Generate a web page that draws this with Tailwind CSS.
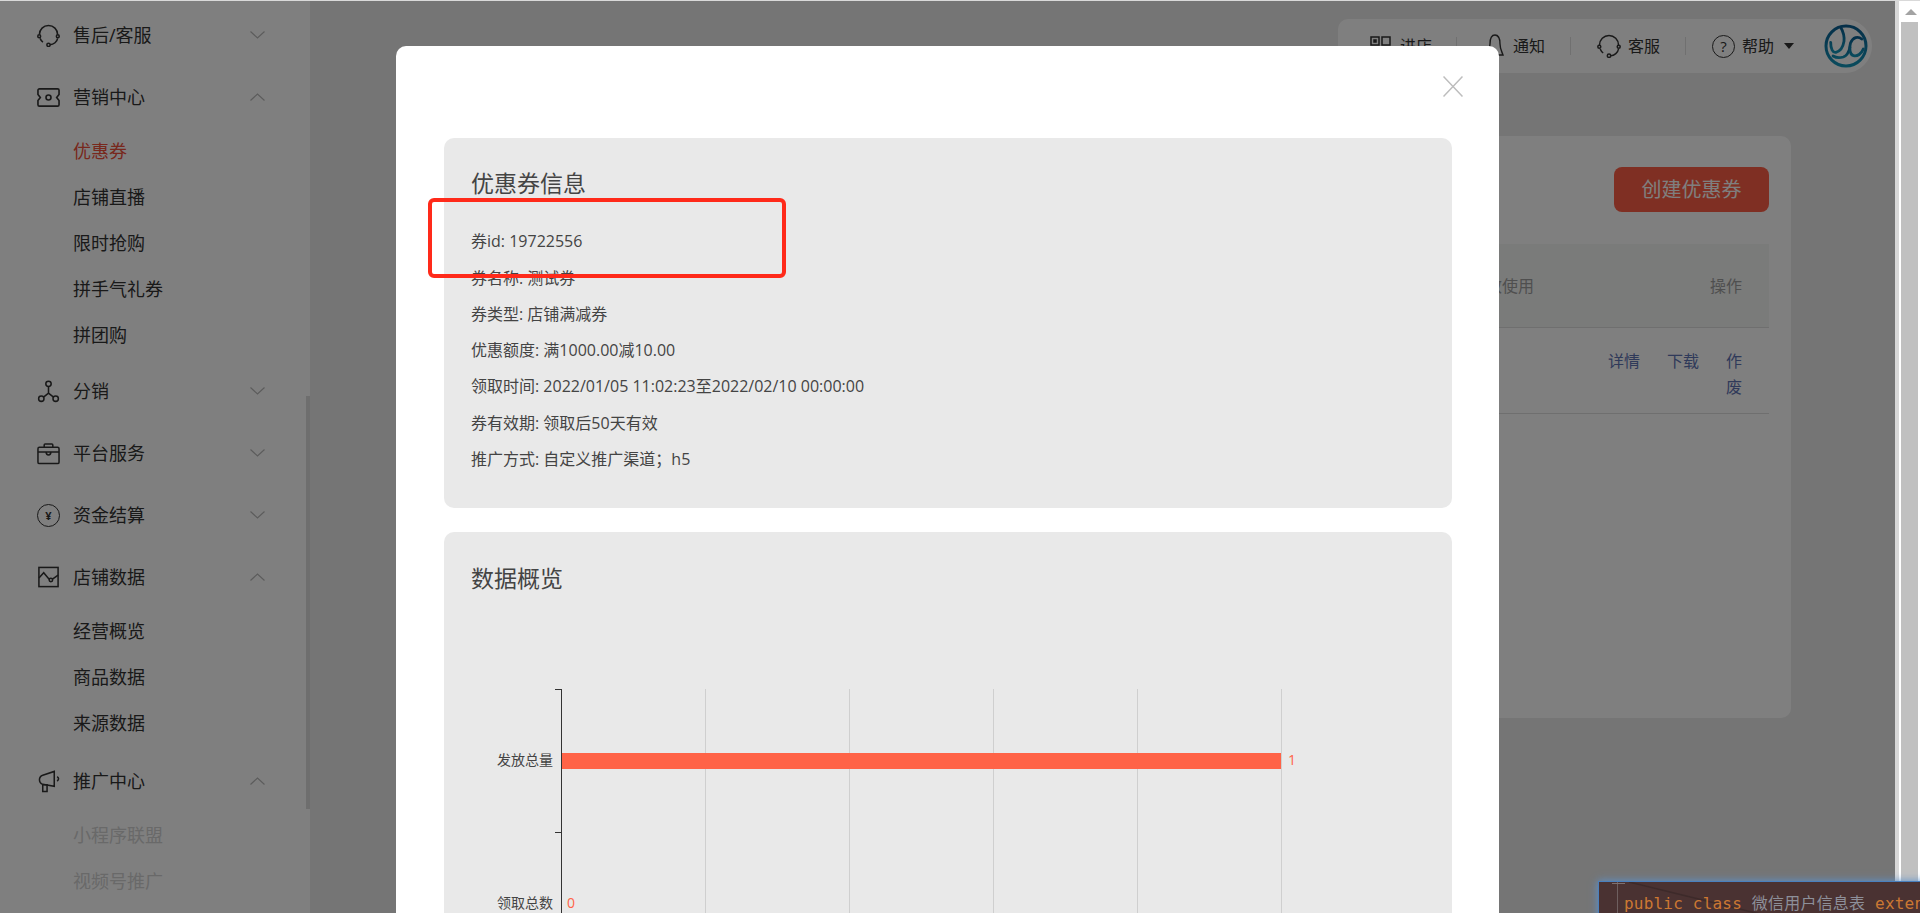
<!DOCTYPE html>
<html lang="zh-CN">
  <head>
    <meta charset="UTF-8" />
    <title>优惠券</title>
    <script src="https://cdn.jsdelivr.net/npm/@tailwindcss/browser@4"></script>
  </head>
  <body class="h-[913px] overflow-hidden bg-[#ebebeb] font-['Open_Sans','Noto_Sans_CJK_SC',sans-serif] text-[#333]">
    <div class="h-px bg-[#d9d9d9]"></div>
    <div class="flex h-[912px]">
      <div class="relative w-[1895px] shrink-0 overflow-hidden">
        <div class="flex h-full">
          <!-- Sidebar -->
          <div class="relative h-full w-[310px] shrink-0 overflow-hidden bg-white pt-[3px] text-[18px]">
            <div class="absolute right-0 top-[395px] h-[413px] w-[4px] bg-[#dcdcdc]"></div>

            <div class="flex h-[62px] items-center pl-[37px] pr-[45px]">
              <svg class="mr-[13px] h-[23px] w-[23px]" viewBox="0 0 24 24" fill="none" stroke="#333" stroke-width="1.600"><path d="M2.500 11a9.500 9.500 0 0 1 19 0" /><circle cx="2.300" cy="12.800" r="1.500" /><circle cx="21.700" cy="12.800" r="1.500" /><path d="M3.200 15c.6 1.500 1.500 3 3 4M21.500 15c-.5 3.500-4 6.500-8 6.700" /><circle cx="12" cy="21.700" r="1.700" /></svg>
              <span class="flex-1">售后/客服</span>
              <svg class="h-[8px] w-[15px]" viewBox="0 0 15 8" fill="none" stroke="#b8b8b8" stroke-width="1.2"><path d="M0.500 0.500 7.500 7 14.500 0.500" /></svg>
            </div>

            <div class="flex h-[62px] items-center pl-[37px] pr-[45px]">
              <svg class="mr-[13px] h-[23px] w-[23px]" viewBox="0 0 24 24" fill="none" stroke="#333" stroke-width="1.700"><path d="M2.500 3h19a1.500 1.500 0 0 1 1.500 1.500v4.300L20.500 12l2.500 3.200v4.300a1.500 1.500 0 0 1-1.500 1.500h-19A1.500 1.500 0 0 1 1 19.500v-4.300L3.500 12 1 8.800V4.500A1.500 1.500 0 0 1 2.500 3z" /><circle cx="12" cy="12" r="2.600" /></svg>
              <span class="flex-1">营销中心</span>
              <svg class="h-[8px] w-[15px]" viewBox="0 0 15 8" fill="none" stroke="#b8b8b8" stroke-width="1.2"><path d="M0.500 7.500 7.500 1 14.500 7.500" /></svg>
            </div>
            <div class="pb-[2px] pl-[73px]">
              <div class="flex h-[46px] items-center text-[#f0503a]">优惠券</div>
              <div class="flex h-[46px] items-center">店铺直播</div>
              <div class="flex h-[46px] items-center">限时抢购</div>
              <div class="flex h-[46px] items-center">拼手气礼券</div>
              <div class="flex h-[46px] items-center">拼团购</div>
            </div>

            <div class="flex h-[62px] items-center pl-[37px] pr-[45px]">
              <svg class="mr-[13px] h-[23px] w-[23px]" viewBox="0 0 24 24" fill="none" stroke="#333" stroke-width="1.600"><circle cx="12" cy="4" r="2.800" /><circle cx="4.500" cy="19.500" r="2.800" /><circle cx="19.500" cy="19.500" r="2.800" /><path d="M12 6.800v7M12 13.800 6.800 17.800M12 13.800l5.200 4" /></svg>
              <span class="flex-1">分销</span>
              <svg class="h-[8px] w-[15px]" viewBox="0 0 15 8" fill="none" stroke="#b8b8b8" stroke-width="1.2"><path d="M0.500 0.500 7.500 7 14.500 0.500" /></svg>
            </div>

            <div class="flex h-[62px] items-center pl-[37px] pr-[45px]">
              <svg class="mr-[13px] h-[23px] w-[23px]" viewBox="0 0 24 24" fill="none" stroke="#333" stroke-width="1.600"><rect x="1" y="5.500" width="22" height="17" rx="1.500" /><path d="M7.500 5.500v-2.500a1 1 0 0 1 1-1h7a1 1 0 0 1 1 1v2.500M1 10.500h22M9.500 10.500c0 4 5 4 5 0" /></svg>
              <span class="flex-1">平台服务</span>
              <svg class="h-[8px] w-[15px]" viewBox="0 0 15 8" fill="none" stroke="#b8b8b8" stroke-width="1.2"><path d="M0.500 0.500 7.500 7 14.500 0.500" /></svg>
            </div>

            <div class="flex h-[62px] items-center pl-[37px] pr-[45px]">
              <div class="mr-[13px] flex h-[23px] w-[23px] items-center justify-center rounded-full border-[1.5px] border-[#333] text-[11px] leading-none font-bold">¥</div>
              <span class="flex-1">资金结算</span>
              <svg class="h-[8px] w-[15px]" viewBox="0 0 15 8" fill="none" stroke="#b8b8b8" stroke-width="1.2"><path d="M0.500 0.500 7.500 7 14.500 0.500" /></svg>
            </div>

            <div class="flex h-[62px] items-center pl-[37px] pr-[45px]">
              <svg class="mr-[13px] h-[23px] w-[23px]" viewBox="0 0 24 24" fill="none" stroke="#333" stroke-width="1.600"><rect x="2" y="1.500" width="20" height="20" /><path d="M2 12.500 7 7l5 6 2.500 2 2-1.500 5.500-4" /><circle cx="14.500" cy="14.500" r="1.800" fill="white" /></svg>
              <span class="flex-1">店铺数据</span>
              <svg class="h-[8px] w-[15px]" viewBox="0 0 15 8" fill="none" stroke="#b8b8b8" stroke-width="1.2"><path d="M0.500 7.500 7.500 1 14.500 7.500" /></svg>
            </div>
            <div class="pb-[4px] pl-[73px]">
              <div class="flex h-[46px] items-center">经营概览</div>
              <div class="flex h-[46px] items-center">商品数据</div>
              <div class="flex h-[46px] items-center">来源数据</div>
            </div>

            <div class="flex h-[62px] items-center pl-[37px] pr-[45px]">
              <svg class="mr-[13px] h-[23px] w-[23px]" viewBox="0 0 24 24" fill="none" stroke="#333" stroke-width="1.600"><path d="M18 1.500v15.500L6 15A5 5 0 0 1 6 5.500z" /><path d="M6 15.500h4.500v7h-4.500zM21 7c2 1 2 3 0 4.500" /></svg>
              <span class="flex-1">推广中心</span>
              <svg class="h-[8px] w-[15px]" viewBox="0 0 15 8" fill="none" stroke="#b8b8b8" stroke-width="1.2"><path d="M0.500 7.500 7.500 1 14.500 7.500" /></svg>
            </div>
            <div class="pl-[73px] text-[#d2d2d2]">
              <div class="flex h-[46px] items-center">小程序联盟</div>
              <div class="flex h-[46px] items-center">视频号推广</div>
            </div>
          </div>

          <!-- Main -->
          <div class="flex-1 pt-[18px]">
            <div class="ml-auto mr-[23px] flex h-[54px] w-[534px] items-center rounded-l-[10px] rounded-r-[27px] bg-white pl-[32px] pr-[4px] text-[16px]">
              <svg class="mr-[9px] h-[21px] w-[21px]" viewBox="0 0 21 21" fill="none" stroke="#333" stroke-width="1.5"><rect x="1" y="1" width="8" height="8" /><rect x="12" y="1" width="8" height="8" /><rect x="1" y="12" width="8" height="8" /><path d="M12 13h8M12 18h8" /><rect x="4" y="4" width="2" height="2" fill="#333" /></svg>
              <span>进店</span>
              <div class="ml-[24px] mr-[29px] h-[18px] w-px bg-[#e0e0e0]"></div>
              <svg class="mr-[9px] h-[24px] w-[18px]" viewBox="0 0 18 24" fill="none" stroke="#333" stroke-width="1.4"><path d="M9 1c-4 0-5 5-5 9 0 5-2 8-3 11h16c-1-3-3-6-3-11 0-4-1-9-5-9z" /></svg>
              <span>通知</span>
              <div class="ml-[25px] mr-[26px] h-[18px] w-px bg-[#e0e0e0]"></div>
              <svg class="mr-[7px] h-[24px] w-[24px]" viewBox="0 0 24 24" fill="none" stroke="#333" stroke-width="1.500"><path d="M2.500 11a9.500 9.500 0 0 1 19 0" /><circle cx="2.300" cy="12.800" r="1.500" /><circle cx="21.700" cy="12.800" r="1.500" /><path d="M3.200 15c.6 1.500 1.500 3 3 4M21.500 15c-.5 3.500-4 6.500-8 6.700" /><circle cx="12" cy="21.700" r="1.700" /></svg>
              <span>客服</span>
              <div class="ml-[25px] mr-[26px] h-[18px] w-px bg-[#e0e0e0]"></div>
              <div class="mr-[7px] flex h-[23px] w-[23px] items-center justify-center rounded-full border-[1.4px] border-[#333] text-[15px] leading-none">?</div>
              <span>帮助</span>
              <div class="ml-[10px] h-0 w-0 border-x-[5px] border-t-[6px] border-x-transparent border-t-[#333]"></div>
              <svg class="ml-auto h-[44px] w-[44px]" viewBox="0 0 44 44" fill="none" stroke-width="2.800" stroke-linecap="round">
                <defs>
                  <linearGradient id="logo-blue" x1="0" y1="0" x2="0" y2="1">
                    <stop offset="0" stop-color="#0a5f92" />
                    <stop offset="1" stop-color="#1596ba" />
                  </linearGradient>
                </defs>
                <g stroke="url(#logo-blue)">
                  <circle cx="22" cy="22" r="20" stroke-width="3" />
                  <path d="M6.700 18.300C6.500 25 9 29 12 28.300c4-1 7-5 8-11 .5-5-1-10-3.300-14" />
                  <path d="M9 32c4 2.500 7 2 10.300 1 3-1 5.500-4.500 6.700-9.700" />
                  <path d="M37.700 15C34 12 29 13 26.500 19c-2 6 0 12 3 12.700 4 1 8-2 9.800-6.700" />
                </g>
              </svg>
            </div>

            <div class="ml-[200px] mr-[104px] mt-[63px] h-[582px] rounded-[10px] bg-white px-[22px] pt-[31px]">
              <div class="flex justify-end">
                <div class="flex h-[45px] w-[155px] items-center justify-center rounded-[8px] bg-[#ff5f46] text-[20px] text-white">创建优惠券</div>
              </div>
              <div class="mt-[32px] flex h-[84px] items-center justify-end border-b border-[#dedede] bg-[#f4f6f4] pr-[27px] text-[16px] text-[#9f9f9f]">
                <span class="mr-[176px]">有效使用</span>
                <span>操作</span>
              </div>
              <div class="flex h-[86px] justify-end border-b border-[#dedede] pr-[27px] pt-[20px] text-[16px] leading-[26px] text-[#5f74b4]">
                <span class="mr-[27px]">详情</span>
                <span class="mr-[27px]">下载</span>
                <span class="w-[16px]">作废</span>
              </div>
            </div>
          </div>
        </div>

        <!-- Mask + dialog -->
        <div class="absolute inset-0 bg-black/50">
          <div class="relative ml-[396px] mt-[45px] h-[900px] w-[1103px] rounded-[10px] bg-white pl-[48px] pr-[47px] pt-[92px]">
            <svg class="absolute right-[36px] top-[30px] h-[21px] w-[20px]" viewBox="0 0 20 21" fill="none" stroke="#bdbdbd" stroke-width="1.500"><path d="M0.500 0.500 19.500 20.500M19.500 0.500 0.500 20.500" /></svg>

            <div class="h-[370px] rounded-[10px] bg-[#e9e9e9] px-[27px] pt-[27px] text-[16px] text-[#444]">
              <div class="text-[23px] leading-[36px]">优惠券信息</div>
              <div class="mt-[21px] flex h-[38px] items-center">券id: 19722556</div>
              <div class="flex h-[36px] items-center">券名称: 测试券</div>
              <div class="flex h-[36px] items-center">券类型: 店铺满减券</div>
              <div class="flex h-[36px] items-center">优惠额度: 满1000.00减10.00</div>
              <div class="flex h-[36px] items-center">领取时间: 2022/01/05 11:02:23至2022/02/10 00:00:00</div>
              <div class="flex h-[37px] items-center">券有效期: 领取后50天有效</div>
              <div class="flex h-[36px] items-center">推广方式: 自定义推广渠道；h5</div>
            </div>

            <div class="mt-[24px] h-[500px] rounded-[10px] bg-[#e9e9e9] px-[27px] pt-[28px] text-[#444]">
              <div class="text-[23px] leading-[36px]">数据概览</div>
              <svg class="-ml-[27px] mt-[93px] block" width="1008" height="240" viewBox="0 0 1008 240">
                <g stroke="#cfcfcf" stroke-width="1">
                  <path d="M261.500 0V240M405.500 0V240M549.500 0V240M693.500 0V240M837.500 0V240" />
                </g>
                <rect x="117" y="64" width="720" height="16" fill="#ff6347" />
                <path d="M117.500 0V240M111 0.500H117M111 143.500H117" stroke="#333" stroke-width="1" fill="none" />
                <text x="109" y="76" text-anchor="end" font-size="14" fill="#444">发放总量</text>
                <text x="109" y="219" text-anchor="end" font-size="14" fill="#444">领取总数</text>
                <text x="844" y="76" font-size="14" fill="#ff6347">1</text>
                <text x="123" y="219" font-size="14" fill="#ff6347">0</text>
              </svg>
            </div>
          </div>
        </div>

        <!-- Red annotation -->
        <div class="absolute left-[428px] top-[197px] h-[80px] w-[358px] rounded-[6px] border-[4px] border-[#ff2a1a]"></div>
      </div>

      <!-- Page scrollbar -->
      <div class="relative w-[25px] shrink-0 bg-white">
        <div class="absolute inset-y-0 left-0 w-[4px] bg-[#d8d8d8]"></div>
        <div class="absolute left-[10px] top-[8px] h-0 w-0 border-x-[6px] border-b-[6px] border-x-transparent border-b-[#a3a3a3]"></div>
        <div class="absolute bottom-0 left-[6px] top-[21px] w-[17px] bg-[#c0c0c0]"></div>
      </div>
    </div>

    <!-- Floating code snippet -->
    <div class="absolute left-[1598px] top-[881px] h-[40px] w-[330px] border-l border-t border-[#4a80bd] bg-[#4a3232] pl-[25px] pt-[11px] font-['DejaVu_Sans_Mono','Noto_Sans_CJK_SC',monospace] text-[16px] leading-[22px] tracking-[0.2px] whitespace-nowrap text-[#cc7832] shadow-[0_0_8px_#5b93d1]">
      <div class="absolute left-[18px] top-0 h-[40px] w-px bg-[#6e5f5f]"></div>
      <div class="absolute left-[13px] top-[1px] h-px w-[13px] bg-[#7d7070]"></div>
      <svg class="absolute left-[30px] top-0" width="140" height="34" viewBox="0 0 140 34" fill="none" stroke="#3d2a2a" stroke-width="1.500"><path d="M0 0 135 33" /></svg>
      <span class="relative">public class <span class="text-[#8d8f99]">微信用户信息表</span> extends</span>
    </div>
  </body>
</html>
